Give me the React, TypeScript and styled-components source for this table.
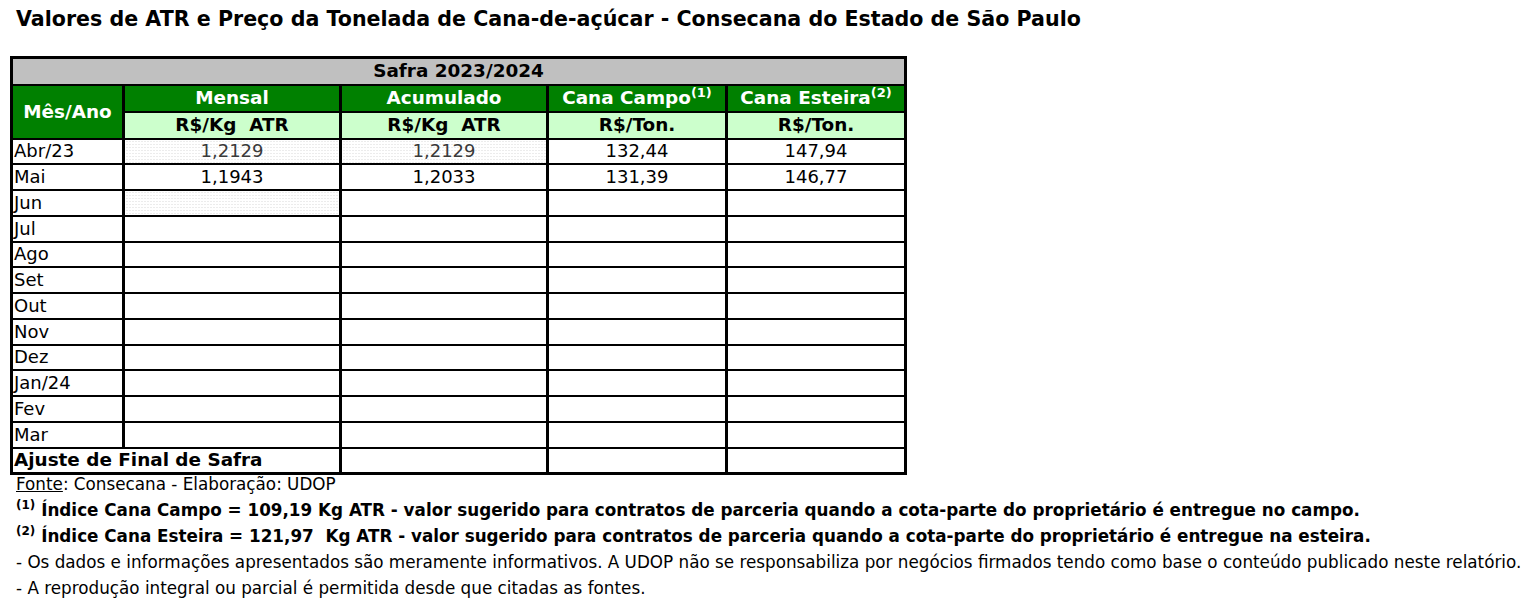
import React from "react";
import styled, { createGlobalStyle } from "styled-components";

const FONT = `Tahoma, "DejaVu Sans", Verdana, sans-serif`;

const GlobalStyle = createGlobalStyle`
  html, body { margin: 0; padding: 0; background: #fff; }
  body { font-family: ${FONT}; color: #000; }
`;

const months = [
  { m: "Abr/23", mensal: "1,2129", acum: "1,2129", campo: "132,44", esteira: "147,94", dot: [true, true] },
  { m: "Mai", mensal: "1,1943", acum: "1,2033", campo: "131,39", esteira: "146,77", dot: [false, false] },
  { m: "Jun", dot: [true, false] },
  { m: "Jul" },
  { m: "Ago" },
  { m: "Set" },
  { m: "Out" },
  { m: "Nov" },
  { m: "Dez" },
  { m: "Jan/24" },
  { m: "Fev" },
  { m: "Mar" },
] as { m: string; mensal?: string; acum?: string; campo?: string; esteira?: string; dot?: boolean[] }[];

const App: React.FC = () => {
  return (
    <Page>
      <GlobalStyle />
      <Title>Valores de ATR e Preço da Tonelada de Cana-de-açúcar - Consecana do Estado de São Paulo</Title>
      <Table>
        <colgroup>
          <col style={{ width: 112 }} />
          <col style={{ width: 217 }} />
          <col style={{ width: 207 }} />
          <col style={{ width: 179 }} />
          <col style={{ width: 179 }} />
        </colgroup>
        <thead>
          <HeadRow>
            <SafraCell colSpan={5}>Safra 2023/2024</SafraCell>
          </HeadRow>
          <HeadRow>
            <GreenCell rowSpan={2}>Mês/Ano</GreenCell>
            <GreenCell>Mensal</GreenCell>
            <GreenCell>Acumulado</GreenCell>
            <GreenCell>
              Cana Campo<Sup>(1)</Sup>
            </GreenCell>
            <GreenCell>
              Cana Esteira<Sup>(2)</Sup>
            </GreenCell>
          </HeadRow>
          <HeadRow>
            <UnitCell>R$/Kg&nbsp; ATR</UnitCell>
            <UnitCell>R$/Kg&nbsp; ATR</UnitCell>
            <UnitCell>R$/Ton.</UnitCell>
            <UnitCell>R$/Ton.</UnitCell>
          </HeadRow>
        </thead>
        <tbody>
          {months.map((r) => (
            <Row key={r.m}>
              <MonthCell>{r.m}</MonthCell>
              <ValueCell $dotted={!!r.dot?.[0]} $muted={!!r.dot?.[0]}>{r.mensal}</ValueCell>
              <ValueCell $dotted={!!r.dot?.[1]} $muted={!!r.dot?.[1]}>{r.acum}</ValueCell>
              <ValueCell>{r.campo}</ValueCell>
              <ValueCell>{r.esteira}</ValueCell>
            </Row>
          ))}
          <Row>
            <AjusteCell colSpan={2}>Ajuste de Final de Safra</AjusteCell>
            <ValueCell />
            <ValueCell />
            <ValueCell />
          </Row>
        </tbody>
      </Table>
      <Notes>
        <NoteLine>
          <Underline>Fonte</Underline>: Consecana - Elaboração: UDOP
        </NoteLine>
        <BoldNote>
          <NoteSup>(1)</NoteSup> Índice Cana Campo = 109,19 Kg ATR - valor sugerido para contratos de parceria quando a
          cota-parte do proprietário é entregue no campo.
        </BoldNote>
        <BoldNote>
          <NoteSup>(2)</NoteSup> Índice Cana Esteira = 121,97&nbsp; Kg ATR - valor sugerido para contratos de parceria
          quando a cota-parte do proprietário é entregue na esteira.
        </BoldNote>
        <NoteLine>
          - Os dados e informações apresentados são meramente informativos. A UDOP não se responsabiliza por negócios
          firmados tendo como base o conteúdo publicado neste relatório.
        </NoteLine>
        <NoteLine>- A reprodução integral ou parcial é permitida desde que citadas as fontes.</NoteLine>
      </Notes>
    </Page>
  );
};

export default App;

const Page = styled.div`
  padding: 7px 0 0 10px;
  width: 1523px;
`;

const Title = styled.h1`
  margin: 0 0 25px 6px;
  font-size: 20.6px;
  font-weight: bold;
  line-height: 24px;
  white-space: nowrap;
`;

const Table = styled.table`
  border-collapse: collapse;
  table-layout: fixed;
  width: 894px;
  border: 3px solid #000;
`;

const Row = styled.tr`
  height: 25.75px;
`;

const HeadRow = styled.tr`
  height: 27px;
`;

const Cell = styled.td`
  border: 2px solid #000;
  border-left-width: 3px;
  border-right-width: 3px;
  padding: 0 1px;
  font-size: 18px;
  line-height: 22px;
  white-space: nowrap;
  overflow: hidden;
`;

const SafraCell = styled(Cell).attrs({ as: "th" })`
  background: #c0c0c0;
  font-weight: bold;
  font-size: 18.4px;
  text-align: center;
`;

const GreenCell = styled(Cell).attrs({ as: "th" })`
  background: #008000;
  color: #fff;
  font-weight: bold;
  font-size: 18.4px;
  text-align: center;
`;

const UnitCell = styled(Cell).attrs({ as: "th" })`
  background: #ccffcc;
  font-weight: bold;
  font-size: 18.4px;
  text-align: center;
`;

const Sup = styled.sup`
  font-size: 13px;
  line-height: 0;
  vertical-align: 7px;
`;

const MonthCell = styled(Cell)`
  text-align: left;
`;

const ValueCell = styled(Cell)<{ $dotted?: boolean; $muted?: boolean }>`
  text-align: center;
  color: ${(p) => (p.$muted ? "#3a3a3a" : "#000")};
  background-color: #fff;
  background-image: ${(p) =>
    p.$dotted ? "radial-gradient(circle, #d8d8d8 0.8px, transparent 1px)" : "none"};
  background-size: 3px 3px;
`;

const AjusteCell = styled(Cell)`
  font-weight: bold;
  font-size: 18.4px;
  text-align: left;
`;

const Notes = styled.div`
  margin-top: -4px;
  padding-left: 6px;
`;

const NoteLine = styled.div`
  font-size: 16.8px;
  line-height: 26px;
  white-space: nowrap;
`;

const BoldNote = styled(NoteLine)`
  font-weight: bold;
`;

const NoteSup = styled.sup`
  font-size: 12px;
  line-height: 0;
  vertical-align: 7px;
`;

const Underline = styled.span`
  text-decoration: underline;
`;
